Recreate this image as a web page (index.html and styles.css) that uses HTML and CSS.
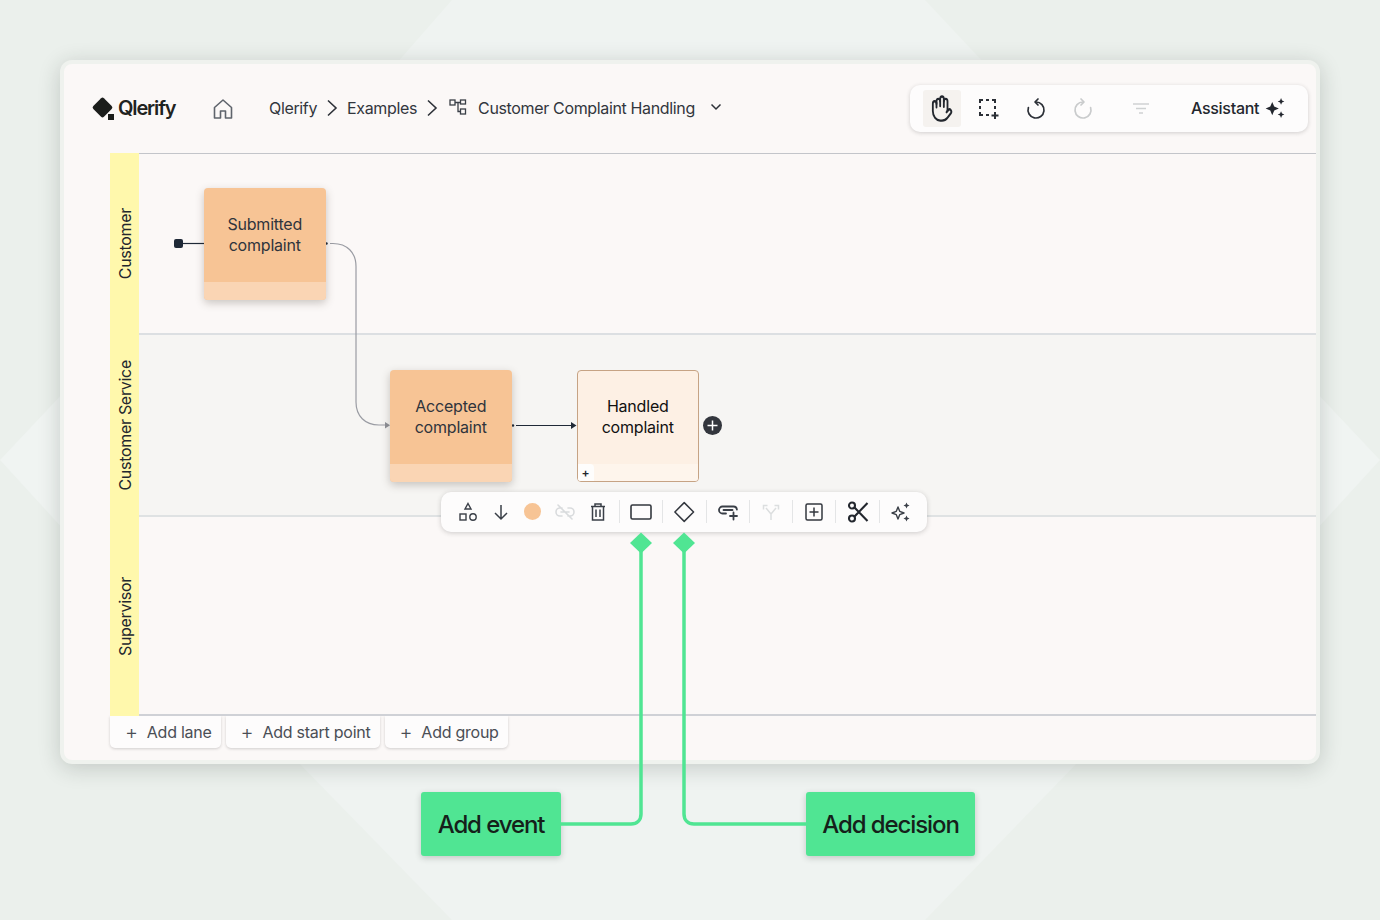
FILE: index.html
```html
<!DOCTYPE html>
<html lang="en">
<head>
  <meta charset="UTF-8">
  <title>Customer Complaint Handling</title>
  <link rel="stylesheet" href="styles.css">
</head>
<body>
  <div class="page">
    <svg class="backdrop" width="1380" height="920" viewBox="0 0 1380 920">
      <polygon points="452,0 925,0 985,64 396,64" fill="#eff3f1"/>
      <polygon points="0,460 64,392 64,530" fill="#f0f4f2"/>
      <polygon points="1380,460 1316,392 1316,530" fill="#f0f4f2"/>
      <polygon points="296,760 1080,760 925,920 452,920" fill="#eff3f1"/>
    </svg>

    <div class="window">
      <header class="topbar">
        <div class="logo">
          <span class="logo-mark"><i class="logo-diamond"></i><i class="logo-dot"></i></span>
          <span class="logo-name">Qlerify</span>
        </div>
        <svg class="home" width="22" height="22" viewBox="0 0 22 22" fill="none" stroke="#5f646c" stroke-width="1.6" stroke-linejoin="round"><path d="M2.500 9.500 11 2l8.500 7.500V20h-6v-7h-5v7h-6z"/></svg>
        <nav class="crumbs">
          <span>Qlerify</span>
          <svg class="chev" width="12" height="18" viewBox="0 0 12 18" fill="none" stroke="#2d3138" stroke-width="1.6"><path d="M2 1.500 10 9l-8 7.500"/></svg>
          <span>Examples</span>
          <svg class="chev" width="12" height="18" viewBox="0 0 12 18" fill="none" stroke="#2d3138" stroke-width="1.6"><path d="M2 1.500 10 9l-8 7.500"/></svg>
          <svg class="flow-icon" width="18" height="16" viewBox="0 0 18 16" fill="none" stroke="#3a3f47" stroke-width="1.3"><rect x="1" y="1" width="5" height="5"/><rect x="11.500" y="1" width="5" height="4"/><rect x="11.500" y="10" width="5" height="5"/><path d="M6 3.500h5.500M9 3.500v9h2.500"/></svg>
          <span>Customer Complaint Handling</span>
          <svg class="caret" width="12" height="8" viewBox="0 0 12 8" fill="none" stroke="#2d3138" stroke-width="1.5"><path d="M1.500 1.500 6 6l4.500-4.500"/></svg>
        </nav>
        <div class="actions">
          <button class="action is-on">
            <svg width="22" height="29" viewBox="0 0 24 24" preserveAspectRatio="none" fill="none" stroke="#23272e" stroke-width="2" stroke-linecap="round" stroke-linejoin="round"><g transform="translate(24 0) scale(-1 1)"><path d="M18 11V6a2 2 0 0 0-4 0"/><path d="M14 10V4a2 2 0 0 0-4 0v2"/><path d="M10 10.500V6a2 2 0 0 0-4 0v8"/><path d="M18 8a2 2 0 1 1 4 0v6a8 8 0 0 1-8 8h-2c-2.800 0-4.500-.86-5.990-2.340l-3.600-3.600a2 2 0 0 1 2.830-2.820L7 15"/></g></svg>
          </button>
          <button class="action">
            <svg width="22" height="22" viewBox="0 0 22 22" fill="none" stroke="#2b2f36" stroke-width="2"><path d="M2 5V2h3M8 2h3M14 2h3v3M2 8v3M2 14v3h3M8 17h3M17 8v3"/><path d="M17 14v7M13.500 17.500h7"/></svg>
          </button>
          <button class="action">
            <svg width="24" height="24" viewBox="0 0 24 24" fill="none" stroke="#2b2f36" stroke-width="1.7" stroke-linecap="round" stroke-linejoin="round"><path d="M12 5a8 8 0 1 1-7.600 5.500"/><path d="M14 2l-3 3 3 3"/></svg>
          </button>
          <button class="action">
            <svg width="24" height="24" viewBox="0 0 24 24" fill="none" stroke="#c9cbcc" stroke-width="1.7" stroke-linecap="round" stroke-linejoin="round"><g transform="translate(24 0) scale(-1 1)"><path d="M12 5a8 8 0 1 1-7.600 5.500"/><path d="M14 2l-3 3 3 3"/></g></svg>
          </button>
          <button class="action filter">
            <svg width="18" height="14" viewBox="0 0 18 14" fill="none" stroke="#cfd1d2" stroke-width="1.500"><path d="M1 2h16M4 6.500h10M7 11h4"/></svg>
          </button>
          <span class="assistant">Assistant</span>
          <svg class="spark" width="22" height="22" viewBox="0 0 20 20" fill="#23272e"><path d="M7.500 4.500 9.300 8.700 13.500 10.500 9.300 12.300 7.500 16.500 5.700 12.300 1.500 10.500 5.700 8.700z"/><path d="M15.500 1 16.400 3.100 18.500 4 16.400 4.900 15.500 7 14.600 4.900 12.500 4 14.600 3.100z"/><path d="M15.500 13 16.400 15.100 18.500 16 16.400 16.900 15.500 19 14.600 16.900 12.500 16 14.600 15.100z"/></svg>
        </div>
      </header>

      <div class="board">
        <section class="lane lane-customer">
          <div class="lane-tag"><span>Customer</span></div>
          <div class="lane-body"></div>
        </section>
        <section class="lane lane-service">
          <div class="lane-tag"><span>Customer Service</span></div>
          <div class="lane-body"></div>
        </section>
        <section class="lane lane-supervisor">
          <div class="lane-tag"><span>Supervisor</span></div>
          <div class="lane-body"></div>
        </section>

        <svg class="wires" width="1206" height="562" viewBox="0 0 1206 562" fill="none">
          <rect x="64" y="86" width="9" height="9" rx="2" fill="#1f2937"/>
          <path d="M73 90.500h21" stroke="#1f2937" stroke-width="1.200"/>
          <circle cx="216.500" cy="90.500" r="1.200" fill="#1f2937"/>
          <path d="M220 90.500h3c14 0 23 9 23 23V249c0 14 9 23 23 23h6" stroke="#9a9ca3" stroke-width="1.200"/>
          <path d="M275 269v6.500l5-3.250z" fill="#8d9096"/>
          <circle cx="403" cy="272.500" r="1.200" fill="#1f2937"/>
          <path d="M406 272.500h55" stroke="#1f2937" stroke-width="1.200"/>
          <path d="M461 269v7l5.500-3.500z" fill="#1f2937"/>
        </svg>

        <div class="node node-submitted"><p>Submitted<br>complaint</p><div class="node-foot"></div></div>
        <div class="node node-accepted"><p>Accepted<br>complaint</p><div class="node-foot"></div></div>
        <div class="node node-handled">
          <p>Handled<br>complaint</p>
          <div class="node-foot"></div>
          <span class="node-add">+</span>
        </div>
        <svg class="next-btn" width="19" height="19" viewBox="0 0 19 19"><circle cx="9.500" cy="9.500" r="9.500" fill="#33363d"/><path d="M9.500 4.500v10M4.500 9.500h10" stroke="#fff" stroke-width="1.500"/></svg>

        <div class="tools">
          <button class="tool"><svg width="22" height="22" viewBox="0 0 22 22" fill="none" stroke="#3a3f47" stroke-width="1.400"><path d="M11 2.500 14 8H8z"/><rect x="3" y="13" width="6" height="6"/><circle cx="16" cy="16" r="3.200"/></svg></button>
          <button class="tool"><svg width="20" height="20" viewBox="0 0 20 20" fill="none" stroke="#3a3f47" stroke-width="1.500"><path d="M10 3v14M4 11l6 6 6-6"/></svg></button>
          <button class="tool"><i class="swatch"></i></button>
          <button class="tool"><svg width="22" height="20" viewBox="0 0 22 20" fill="none" stroke="#d9dbdd" stroke-width="1.600" stroke-linecap="round"><path d="M8 6H6a4 4 0 0 0 0 8h2M14 6h2a4 4 0 0 1 0 8h-2M7 10h8M4 3l14 14"/></svg></button>
          <button class="tool"><svg width="18" height="20" viewBox="0 0 18 20" fill="none" stroke="#3a3f47" stroke-width="1.500"><path d="M2 4.500h14M6 4.500V2h6v2.500M3.500 4.500V18h11V4.500M7 7.500v7.500M11 7.500v7.500"/></svg></button>
          <i class="tool-sep"></i>
          <button class="tool"><svg width="22" height="16" viewBox="0 0 22 16"><rect x="1" y="1" width="20" height="14" rx="1.500" fill="none" stroke="#33373e" stroke-width="1.600"/></svg></button>
          <i class="tool-sep"></i>
          <button class="tool"><svg width="24" height="24" viewBox="0 0 24 24"><path d="M12 2 22 12 12 22 2 12z" fill="none" stroke="#33373e" stroke-width="1.600" stroke-linejoin="round"/></svg></button>
          <i class="tool-sep"></i>
          <button class="tool"><svg width="22" height="20" viewBox="0 0 22 20" fill="none" stroke="#3a3f47" stroke-width="1.800" stroke-linecap="round"><path d="M7 4.500H5.500a3.500 3.500 0 0 0 0 7H9M6.500 8h9M7 4.500h9.500a3.500 3.500 0 0 1 3.400 3.200"/><path d="M16.500 10.500v7M13 14h7"/></svg></button>
          <i class="tool-sep"></i>
          <button class="tool"><svg width="20" height="20" viewBox="0 0 20 20" fill="none" stroke="#dcdedf" stroke-width="1.500"><path d="M10 18v-6L5 6M10 12l5-6M2.500 7.500v-4h4M17.500 7.500v-4h-4"/></svg></button>
          <i class="tool-sep"></i>
          <button class="tool"><svg width="18" height="18" viewBox="0 0 18 18" fill="none" stroke="#33373e" stroke-width="1.500"><rect x="1" y="1" width="16" height="16" rx="1.500"/><path d="M9 4.500v9M4.500 9h9"/></svg></button>
          <i class="tool-sep"></i>
          <button class="tool"><svg width="22" height="22" viewBox="0 0 22 22" fill="none" stroke="#23272e" stroke-width="2.100"><circle cx="5" cy="4.500" r="3"/><circle cx="5" cy="17.500" r="3"/><path d="M7.500 6.500 20.500 20M7.500 15.500 20.500 2"/></svg></button>
          <i class="tool-sep"></i>
          <button class="tool"><svg width="22" height="22" viewBox="0 0 22 22"><path d="M8 6 9.700 10.300 14 12 9.700 13.700 8 18 6.300 13.700 2 12 6.300 10.300z" fill="none" stroke="#3a3f47" stroke-width="1.400" stroke-linejoin="round"/><path d="M16.500 1.500 17.400 3.600 19.500 4.500 17.400 5.400 16.500 7.500 15.600 5.400 13.500 4.500 15.600 3.600z" fill="#3a3f47"/><path d="M16.500 14.500 17.400 16.600 19.500 17.500 17.400 18.400 16.500 20.500 15.600 18.400 13.500 17.500 15.600 16.600z" fill="#3a3f47"/></svg></button>
        </div>
      </div>

      <div class="adders">
        <button class="adder"><b>+</b>Add lane</button>
        <button class="adder"><b>+</b>Add start point</button>
        <button class="adder"><b>+</b>Add group</button>
      </div>
    </div>

    <div class="callouts">
      <div class="callout callout-event">Add event</div>
      <div class="callout callout-decision">Add decision</div>
    </div>

    <svg class="pointers" width="1380" height="920" viewBox="0 0 1380 920" fill="none">
      <path d="M641 532.500 652 543 641 553.500 630 543z" fill="#50e593"/>
      <path d="M684 532.500 695 543 684 553.500 673 543z" fill="#50e593"/>
      <path d="M561 824h70c6 0 10-4 10-10V545" stroke="#50e593" stroke-width="3.500"/>
      <path d="M806 824h-112c-6 0-10-4-10-10V545" stroke="#50e593" stroke-width="3.500"/>
    </svg>
  </div>
</body>
</html>
```

FILE: styles.css
```css
body {
  margin: 0;
  font-family: Inter, "Noto Sans", sans-serif;
  color: #2f343c;
}
button {
  font: inherit;
  color: inherit;
  border: none;
  background: none;
  padding: 0;
}
.page {
  position: relative;
  width: 1380px;
  height: 920px;
  padding-top: 60px;
  box-sizing: border-box;
  overflow: hidden;
  background-color: #ebf0ec;
}
.backdrop, .pointers {
  position: absolute;
  left: 0;
  top: 0;
}
.window {
  position: relative;
  width: 1260px;
  height: 704px;
  margin-left: 60px;
  box-sizing: border-box;
  border: 4px solid #eff2ee;
  border-radius: 12px;
  background-color: #fbf8f7;
  box-shadow: 0 4px 22px rgba(30, 40, 35, 0.2);
}

/* top bar */
.topbar {
  display: flex;
  align-items: center;
  height: 89px;
  padding: 0 8px 0 27px;
}
.logo {
  display: flex;
  align-items: center;
  width: 120.500px;
  margin-top: -1px;
}
.logo-mark {
  position: relative;
  width: 24px;
  height: 24px;
  margin-right: 3px;
}
.logo-diamond {
  position: absolute;
  left: 3.500px;
  top: 3.500px;
  width: 15px;
  height: 15px;
  border-radius: 2px;
  background-color: #1b1d1b;
  transform: rotate(45deg);
}
.logo-dot {
  position: absolute;
  left: 17px;
  top: 18px;
  width: 6px;
  height: 6px;
  background-color: #1b1d1b;
}
.logo-name {
  font-size: 20px;
  font-weight: 600;
  letter-spacing: -1.150px;
  color: #1f2321;
}
.home {
  margin-right: 35.500px;
}
.crumbs {
  display: flex;
  align-items: center;
  margin-top: -1px;
  font-size: 16px;
  letter-spacing: -0.350px;
  color: #32363d;
}
.chev {
  margin: 0 9px 0 9px;
}
.chev + .flow-icon {
  margin-left: 2px;
}
.flow-icon {
  margin-right: 11px;
  margin-top: -2px;
}
.caret {
  margin: -2px 0 0 15px;
}
.actions {
  display: flex;
  align-items: center;
  margin-left: auto;
  width: 398px;
  height: 47px;
  box-sizing: border-box;
  padding-left: 13px;
  gap: 9px;
  border-radius: 10px;
  background-color: #fdfcfc;
  box-shadow: 0 1px 4px rgba(40, 40, 40, 0.2);
}
.action {
  display: flex;
  align-items: center;
  justify-content: center;
  width: 38px;
  height: 37px;
  border-radius: 3px;
}
.is-on {
  background-color: #f5f2ef;
}
.filter {
  margin-left: 11px;
}
.assistant {
  margin-left: 22px;
  margin-top: -1px;
  font-size: 16px;
  font-weight: 500;
  letter-spacing: -0.300px;
  color: #23272e;
}
.spark {
  margin-left: -4px;
  margin-top: -1px;
}

/* swimlanes */
.board {
  position: relative;
  margin-left: 46px;
}
.lane {
  display: flex;
}
.lane-customer { height: 180px; }
.lane-service { height: 182px; }
.lane-supervisor { height: 201px; }
.lane-tag {
  display: flex;
  align-items: center;
  justify-content: center;
  flex: none;
  width: 28.500px;
  padding-left: 1px;
  box-sizing: border-box;
  background-color: #fff8ac;
}
.lane-tag span {
  writing-mode: vertical-rl;
  transform: rotate(180deg) translateY(-1px);
  font-size: 16px;
  white-space: nowrap;
  letter-spacing: -0.300px;
  color: #23272e;
}
.lane-body {
  flex: 1;
  border-top: 1px solid #d0d2d7;
}
.lane-customer .lane-body { border-top-color: #c3c5ca; }
.lane-service .lane-body {
  background-color: #f6f5f3;
  border-top-width: 2px;
  border-top-color: #dcdfe2;
}
.lane-supervisor .lane-body {
  border-top-width: 2px;
  border-top-color: #dfe2e3;
  border-bottom: 2px solid #cfd1d6;
}
.wires {
  position: absolute;
  left: 0;
  top: 0;
}
.node {
  position: absolute;
  display: flex;
  flex-direction: column;
  width: 121.500px;
  height: 112px;
  box-sizing: border-box;
  border-radius: 4px;
  background-color: #f7c495;
  overflow: hidden;
  box-shadow: 0 3px 9px rgba(60, 50, 40, 0.26);
}
.node p {
  flex: 1;
  margin: 0;
  padding-top: 25.500px;
  font-size: 16px;
  line-height: 21px;
  letter-spacing: -0.200px;
  text-align: center;
  color: #2f343c;
}
.node-foot {
  height: 18px;
  background-color: #fad5b4;
}
.node-submitted { left: 94px; top: 35px; }
.node-accepted { left: 280px; top: 217px; }
.node-handled {
  left: 467px;
  top: 217px;
  border: 1px solid #c6a384;
  background-color: #fdf0e4;
  box-shadow: none;
}
.node-handled p {
  padding-top: 24.500px;
  color: #111;
}
.node-handled .node-foot {
  height: 17px;
  background-color: #fef5ec;
}
.node-add {
  position: absolute;
  left: -1px;
  bottom: -1px;
  width: 17px;
  height: 18px;
  border-radius: 0 4px 0 4px;
  background-color: #fefdfc;
  font-size: 12px;
  font-weight: 600;
  line-height: 18px;
  text-align: center;
  color: #23272e;
}
.next-btn {
  position: absolute;
  left: 593px;
  top: 263px;
}
.tools {
  position: absolute;
  left: 331px;
  top: 339px;
  display: flex;
  align-items: center;
  gap: 9.950px;
  width: 486px;
  height: 40px;
  box-sizing: border-box;
  padding-left: 16px;
  border-radius: 10px;
  background-color: #fdfcfc;
  box-shadow: 0 1px 5px rgba(40, 40, 40, 0.22);
}
.tool {
  display: flex;
  align-items: center;
  justify-content: center;
  flex: none;
  width: 22.450px;
  height: 26px;
  margin-top: -1px;
}
.tool-sep {
  flex: none;
  width: 1px;
  height: 23px;
  margin-top: -1px;
  background-color: #e4e5e6;
}
.swatch {
  width: 17px;
  height: 17px;
  border-radius: 50%;
  background-color: #f7c495;
}

/* buttons under the lanes */
.adders {
  display: flex;
  gap: 5px;
  margin-left: 46px;
}
.adder {
  height: 32px;
  padding: 0 9px 0 15px;
  border-radius: 0 0 5px 5px;
  background-color: #fdfcfc;
  box-shadow: 0 1px 3px rgba(40, 40, 40, 0.2);
  font-size: 16px;
  letter-spacing: -0.250px;
  color: #4a4e55;
}
.adder b {
  margin-right: 9px;
  font-weight: 300;
  font-size: 20px;
  line-height: 1;
  vertical-align: -1px;
}

/* green labels */
.callouts {
  position: relative;
  display: flex;
  gap: 245px;
  margin: 28px 0 0 421px;
}
.callout {
  display: flex;
  align-items: center;
  justify-content: center;
  height: 64px;
  border-radius: 3px;
  background-color: #50e593;
  box-shadow: 0 2px 6px rgba(30, 40, 35, 0.22);
  font-size: 24px;
  font-weight: 500;
  letter-spacing: -1.100px;
  color: #15201a;
}
.callout-event { width: 140px; }
.callout-decision { width: 169px; }
```
